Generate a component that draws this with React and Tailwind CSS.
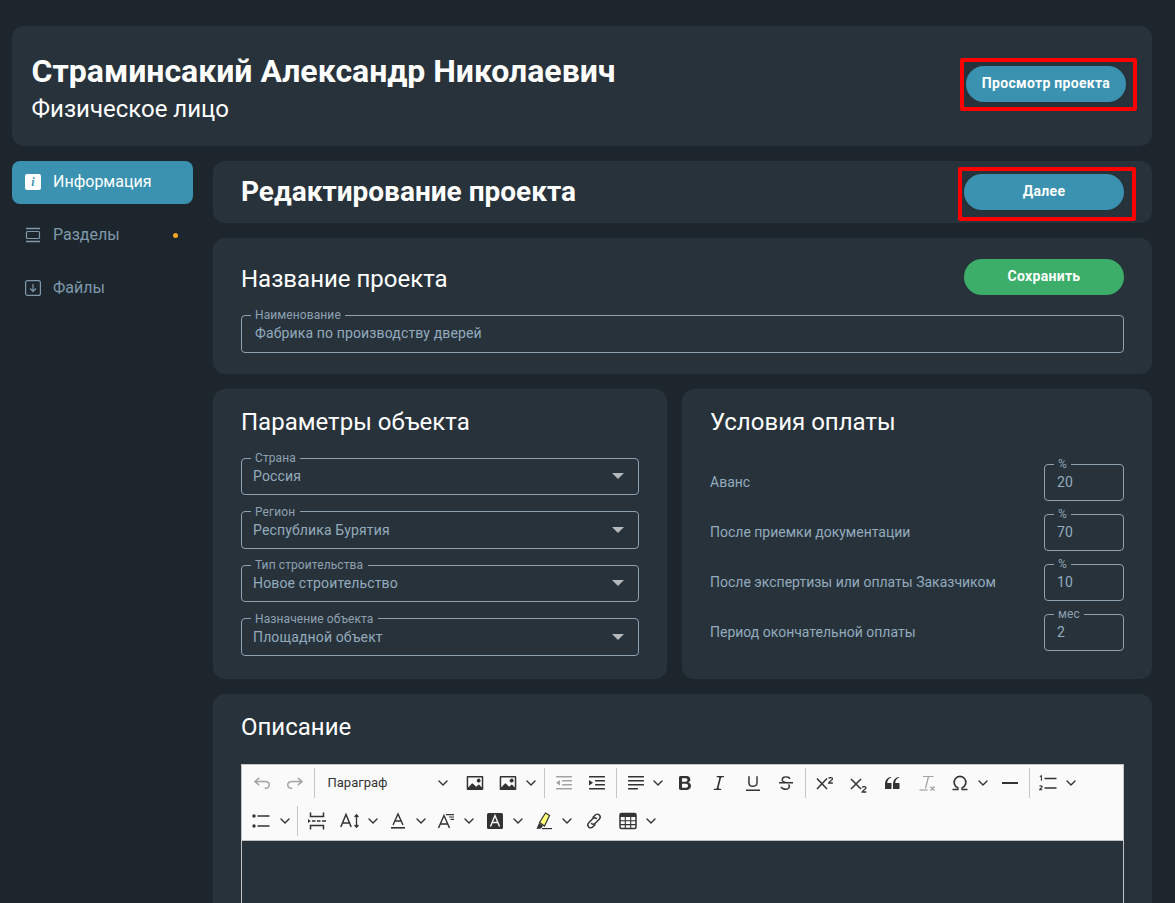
import React from 'react';

const Icon = ({ children, className = 'text-[#333333]' }) => (
  <svg viewBox="0 0 20 20" fill="none" className={`w-5 h-5 shrink-0 ${className}`}>{children}</svg>
);

const Chev = () => (
  <svg viewBox="0 0 10 10" fill="none" className="w-2.5 h-2.5 ml-[7.5px] shrink-0 text-[#333333]">
    <path d="M1 3l4 4 4-4" stroke="currentColor" strokeWidth="1.4" strokeLinecap="round" strokeLinejoin="round" />
  </svg>
);

const Sep = () => (
  <div className="w-1.5 h-[30px] flex justify-center shrink-0">
    <div className="w-px h-full bg-[#c6c6c6]" />
  </div>
);

const Btn = ({ children, w = 'w-[33px]' }) => (
  <div className={`${w} h-[34px] flex items-center justify-center shrink-0`}>{children}</div>
);

const Split = ({ children, w = 'w-[49.5px]' }) => (
  <div className={`${w} h-[34px] flex items-center pl-[6.5px] shrink-0`}>
    {children}
    <Chev />
  </div>
);

const imagePath = 'M6.91 10.54c.26-.23.64-.21.88.03l3.36 3.14 2.23-2.06a.64.64 0 0 1 .87 0l2.52 2.97V4.5H3.2v10.12l3.71-4.08zm10.27-7.51c.6 0 1.09.47 1.09 1.05v11.84c0 .59-.49 1.06-1.09 1.06H2.79c-.6 0-1.09-.47-1.09-1.06V4.08c0-.58.49-1.05 1.1-1.05h14.38zm-5.22 5.56a1.96 1.96 0 1 1 3.4-1.96 1.96 1.96 0 0 1-3.4 1.96z';

const Undo = () => (
  <Icon className="text-[#a3a3a3]">
    <path fill="currentColor" d="m5.042 9.367 2.189 1.837a.75.75 0 0 1-.965 1.149l-3.788-3.18a.747.747 0 0 1-.21-.284.75.75 0 0 1 .17-.945L6.23 4.762a.75.75 0 1 1 .964 1.15L4.863 7.866h8.917A.75.75 0 0 1 14 7.9a4 4 0 1 1-1.477 7.718l.344-1.489a2.5 2.5 0 1 0 1.094-4.73l.008-.032H5.042z" />
  </Icon>
);

const Redo = () => (
  <Icon className="text-[#a3a3a3]">
    <path fill="currentColor" d="m14.958 9.367-2.189 1.837a.75.75 0 0 0 .965 1.149l3.788-3.18a.747.747 0 0 0 .21-.284.75.75 0 0 0-.17-.945L13.77 4.762a.75.75 0 1 0-.964 1.15l2.331 1.955H6.22A.75.75 0 0 0 6 7.9a4 4 0 1 0 1.477 7.718l-.344-1.489A2.5 2.5 0 1 1 6.039 9.4l-.008-.032h8.927z" />
  </Icon>
);

const ImageIcon = () => (
  <Icon><path fill="currentColor" d={imagePath} /></Icon>
);

const IndentLines = ({ color }) => (
  <g fill={color}>
    <rect x="2" y="3" width="16" height="1.5" rx=".5" />
    <rect x="8" y="7" width="10" height="1.5" rx=".5" />
    <rect x="8" y="11" width="10" height="1.5" rx=".5" />
    <rect x="2" y="15" width="16" height="1.5" rx=".5" />
  </g>
);

const Toolbar = () => (
  <div className="bg-[#fafafa] border border-[#c4c4c4] h-[77px] pl-[3.5px]">
    <div className="flex items-center h-9">
      <Btn><Undo /></Btn>
      <Btn><Redo /></Btn>
      <Sep />
      <div className="w-[141px] h-[34px] pl-[10px] pr-[11px] flex items-center justify-between shrink-0 text-[13px] text-[#333333]">
        <span>Параграф</span>
        <Chev />
      </div>
      <Btn><ImageIcon /></Btn>
      <Split><ImageIcon /></Split>
      <Sep />
      <Btn>
        <Icon>
          <IndentLines color="#a3a3a3" />
          <path fill="#a3a3a3" d="M2 9.75 6 7v5.5z" />
        </Icon>
      </Btn>
      <Btn>
        <Icon>
          <IndentLines color="#333333" />
          <path fill="#333333" d="M6 9.75 2 7v5.5z" />
        </Icon>
      </Btn>
      <Sep />
      <Split>
        <Icon>
          <g fill="currentColor">
            <rect x="2" y="3" width="16" height="1.4" rx=".5" />
            <rect x="2" y="7" width="16" height="1.4" rx=".5" />
            <rect x="2" y="11" width="16" height="1.4" rx=".5" />
            <rect x="2" y="15" width="10" height="1.4" rx=".5" />
          </g>
        </Icon>
      </Split>
      <Btn>
        <Icon>
          <path fill="currentColor" d="M10.187 17H5.773c-.637 0-1.092-.138-1.364-.415-.273-.277-.409-.718-.409-1.323V4.738c0-.617.14-1.062.419-1.332.279-.27.73-.406 1.354-.406h4.68c.69 0 1.288.041 1.793.124.506.083.96.242 1.36.478.341.197.644.447.906.75a3.262 3.262 0 0 1 .808 2.162c0 1.401-.722 2.426-2.167 3.075C15.05 10.175 16 11.315 16 13.01a3.756 3.756 0 0 1-2.296 3.504 6.1 6.1 0 0 1-1.517.377c-.571.073-1.238.11-2 .11zm-.217-6.217H7v4.087h3.069c1.977 0 2.965-.69 2.965-2.072 0-.707-.256-1.22-.768-1.537-.512-.319-1.277-.478-2.296-.478zM7 5.13v3.619h2.606c.729 0 1.292-.067 1.69-.2a1.6 1.6 0 0 0 .91-.765c.165-.267.247-.566.247-.897 0-.707-.26-1.176-.778-1.409-.519-.232-1.31-.348-2.375-.348H7z" />
        </Icon>
      </Btn>
      <Btn w="w-[34px]">
        <Icon>
          <path fill="currentColor" d="m9.586 14.633.021.004c-.036.335.095.655.393.962.082.083.173.15.274.201h1.474a.6.6 0 1 1 0 1.2H5.304a.6.6 0 0 1 0-1.2h1.15c.474-.07.809-.182 1.005-.334.157-.122.291-.32.404-.597l2.416-9.55a1.053 1.053 0 0 0-.281-.823 1.12 1.12 0 0 0-.442-.296H8.15a.6.6 0 0 1 0-1.2h6.443a.6.6 0 1 1 0 1.2h-1.195c-.376.056-.65.155-.823.296-.215.175-.423.439-.623.79l-2.366 9.347z" />
        </Icon>
      </Btn>
      <Btn w="w-[34px]">
        <Icon>
          <path fill="currentColor" d="M3 18v-1.5h14V18zm2.2-8V3.6c0-.4.4-.6.8-.6.3 0 .7.2.7.6v6.2c0 2 1.3 2.8 3.2 2.8 1.9 0 3.4-.9 3.4-2.9V3.6c0-.3.4-.5.8-.5.3 0 .6.2.6.5V10c0 2.7-2.2 4-4.9 4-2.6 0-4.6-1.3-4.6-4z" />
        </Icon>
      </Btn>
      <Btn>
        <Icon>
          <path fill="currentColor" d="M7 16.4c-.8-.4-1.5-.9-2.2-1.5a.6.6 0 0 1-.2-.5l.3-.6h1c1 1.2 2.1 1.7 3.7 1.7 1 0 1.8-.3 2.3-.6.6-.4.6-1.2.6-1.3.2-1.2-.9-2.1-.9-2.1h2.1c.3.7.4 1.2.4 1.7v.8l-.6 1.2c-.6.8-1.1 1-1.6 1.2a6 6 0 0 1-2.4.6c-1 0-1.9-.3-2.5-.6zM6.8 9L6 8.3c-.4-.5-.5-.8-.5-1.6 0-.7.1-1.3.5-1.8.4-.6 1-1 1.6-1.3a6.3 6.3 0 0 1 4.7 0 4 4 0 0 1 1.7 1l.3.7c0 .1.2.4-.2.7-.4.2-.9.1-1 0a3 3 0 0 0-1.2-1c-.4-.2-1-.3-2-.4-.7 0-1.4.2-2 .6-.8.6-1 .8-1 1.5 0 .8.5 1 1.2 1.5.6.3 1.1.4 1.9.7H6.8z M3 10.5V9h14v1.5z" />
        </Icon>
      </Btn>
      <Sep />
      <Btn>
        <Icon>
          <path d="M2 5.5l10 10.5M12 5.5 2 16" stroke="currentColor" strokeWidth="1.5" />
          <path d="M13.7 5.5c.3-1.3 3.8-1.3 3.8.4 0 1.4-3.4 2.3-3.8 4.1h4.1" stroke="currentColor" strokeWidth="1.3" />
        </Icon>
      </Btn>
      <Btn>
        <Icon>
          <path d="M3 6l10 10M13 6 3 16" stroke="currentColor" strokeWidth="1.5" />
          <path d="M14.2 14.5c.3-1.3 3.8-1.3 3.8.4 0 1.4-3.4 2.3-3.8 4.1h4.1" stroke="currentColor" strokeWidth="1.3" />
        </Icon>
      </Btn>
      <Btn w="w-[35px]">
        <Icon>
          <path fill="currentColor" d="M3 10.423a6.5 6.5 0 0 1 6.056-6.408l.038.67C6.448 5.423 5.354 7.663 5.22 10H9c.552 0 .5.432.5.986v4.511c0 .554-.448.503-1 .503h-5c-.552 0-.5-.449-.5-1.003v-4.574zm8 0a6.5 6.5 0 0 1 6.056-6.408l.038.67c-2.646.739-3.74 2.979-3.873 5.315H17c.552 0 .5.432.5.986v4.511c0 .554-.448.503-1 .503h-5c-.552 0-.5-.449-.5-1.003v-4.574z" />
        </Icon>
      </Btn>
      <Btn w="w-[34px]">
        <Icon className="text-[#a3a3a3]">
          <path d="M6 3.5h10.5M11.5 3.5 8.5 15.5" stroke="currentColor" strokeWidth="1.2" />
          <path d="M2.5 17h8" stroke="currentColor" strokeWidth="1.2" />
          <path d="M13.5 13.5l4 4M17.5 13.5l-4 4" stroke="currentColor" strokeWidth="1.4" />
        </Icon>
      </Btn>
      <Split>
        <Icon>
          <path d="M2.5 16.5h5.3v-1.8a5.9 5.9 0 1 1 4.4 0v1.8h5.3" stroke="currentColor" strokeWidth="1.6" />
        </Icon>
      </Split>
      <Btn>
        <Icon><rect x="2" y="9" width="16" height="2" fill="currentColor" /></Icon>
      </Btn>
      <Sep />
      <Split>
        <Icon>
          <path d="M5.5 5.5h12M5.5 15h12" stroke="currentColor" strokeWidth="1.4" />
          <path d="M.8 3.6l1.6-.8v5M.6 13.4c.3-.8 2.6-.8 2.6.4 0 1-2.3 1.8-2.6 3h2.8" stroke="currentColor" strokeWidth="1.1" />
        </Icon>
      </Split>
    </div>
    <div className="flex items-center h-[38px] pt-0.5">
      <Split w="w-[49px]">
        <Icon>
          <circle cx="2" cy="5" r="1.7" fill="currentColor" />
          <circle cx="2" cy="15" r="1.7" fill="currentColor" />
          <path d="M5.5 5h12M5.5 15h12" stroke="currentColor" strokeWidth="1.5" />
        </Icon>
      </Split>
      <Sep />
      <Btn>
        <Icon>
          <path d="M3.5 1.5v4h13v-4M3.5 18.5v-4h13v4" stroke="currentColor" strokeWidth="1.5" />
          <path d="M5 10h3.5M10 10h3.5M15 10h4" stroke="currentColor" strokeWidth="1.5" />
          <path d="M3.8 10 1 8v4z" fill="currentColor" />
        </Icon>
      </Btn>
      <Split w="w-[48px]">
        <Icon>
          <path d="M.8 16 6 3.5 11.2 16M2.6 12h6.8" stroke="currentColor" strokeWidth="1.5" />
          <path d="M16.5 4v12M14.6 6l1.9-2.2L18.4 6M14.6 14l1.9 2.2 1.9-2.2" stroke="currentColor" strokeWidth="1.3" />
        </Icon>
      </Split>
      <Split w="w-[48px]">
        <Icon>
          <path d="M5 14 10 3l5 11M6.8 10h6.4" stroke="currentColor" strokeWidth="1.4" />
          <rect x="3" y="16" width="14" height="1.6" fill="currentColor" />
        </Icon>
      </Split>
      <Split w="w-[49px]">
        <Icon>
          <path d="M2.5 17 8 4.5 13.5 17M4.4 13h7.2" stroke="currentColor" strokeWidth="1.4" />
          <path d="M10 3.6h8M13 6h5M14.5 8.4h3.5" stroke="currentColor" strokeWidth="1.1" />
        </Icon>
      </Split>
      <Split w="w-[49px]">
        <Icon>
          <rect x="2" y="2" width="16" height="16" rx="1.5" fill="currentColor" />
          <path d="M5.5 15.5 10 4.5l4.5 11M7.1 11.5h5.8" stroke="#fafafa" strokeWidth="1.4" />
        </Icon>
      </Split>
      <Split w="w-[49px]">
        <Icon>
          <path d="M5.5 11.5 11.5 2l4 2.5-5 10.5z" fill="#fdfd77" stroke="#333333" strokeWidth="1.2" />
          <path d="M5 12 2.5 18l4.5-.4 2-2.6z" fill="#333333" />
          <rect x="8" y="17" width="10" height="1.2" fill="#333333" />
        </Icon>
      </Split>
      <Btn w="w-[35px]">
        <Icon>
          <path d="M7.5 12.5c1.3 1.3 2.9.7 3.8-.2l3.7-3.7c1.5-1.5 1.5-3.3.3-4.5s-3-1.2-4.5.3L9 6.2" stroke="currentColor" strokeWidth="1.4" strokeLinecap="round" />
          <path d="M12.5 7.5c-1.3-1.3-2.9-.7-3.8.2L5 11.4c-1.5 1.5-1.5 3.3-.3 4.5s3 1.2 4.5-.3l1.8-1.8" stroke="currentColor" strokeWidth="1.4" strokeLinecap="round" />
        </Icon>
      </Btn>
      <Split>
        <Icon>
          <rect x="2" y="2.5" width="16" height="15" rx="1.5" stroke="currentColor" strokeWidth="1.5" />
          <rect x="2" y="2.5" width="16" height="3.5" fill="currentColor" />
          <path d="M7.3 6v11M12.7 6v11M2 9.8h16M2 13.6h16" stroke="currentColor" strokeWidth="1.1" />
        </Icon>
      </Split>
    </div>
  </div>
);

const Field = ({ label, className = 'h-[43px]', children }) => (
  <fieldset className={`min-w-0 border border-[#8ea1b1] rounded-[4px] ${className}`}>
    <legend className="ml-[8.5px] px-[4.5px] text-xs leading-3 tracking-[0.1px] text-[#8ea1b1]">{label}</legend>
    {children}
  </fieldset>
);

const SelectField = ({ label, value }) => (
  <Field label={label}>
    <div className="h-6 pl-[11px] pr-[14px] flex items-center justify-between text-sm tracking-[0.14px] text-[#93abbd]">
      <span>{value}</span>
      <svg viewBox="0 0 12 6" className="w-3 h-1.5 text-[#b5b9bc]">
        <path d="M0 0h12L6 6z" fill="currentColor" />
      </svg>
    </div>
  </Field>
);

const PayRow = ({ label, unit, value }) => (
  <div className="flex items-center justify-between">
    <span className="pt-[5px] text-sm text-[#93abbd]">{label}</span>
    <Field label={unit} className="h-[43px] w-20">
      <div className="h-6 pl-3 flex items-center text-sm tracking-[0.14px] text-[#93abbd]">{value}</div>
    </Field>
  </div>
);

const BlueButton = ({ children }) => (
  <button className="w-40 h-9 pb-0.5 rounded-full bg-[#3b92b0] text-white text-sm font-bold tracking-[0.3px]">{children}</button>
);

export default function App() {
  return (
    <div className="h-[903px] overflow-hidden bg-[#1c262c] pt-[26px] px-3 font-[Roboto,sans-serif] text-white">
      <div className="w-[1140px] h-[120px] rounded-xl bg-[#28323b] pl-[19.5px] pr-[26px] flex items-center justify-between">
        <div className="pt-1">
          <h1 className="text-[32px] leading-[38px] font-bold">Страминсакий Александр Николаевич</h1>
          <p className="mt-1 text-2xl leading-[30px]">Физическое лицо</p>
        </div>
        <div className="relative mb-1">
          <BlueButton>Просмотр проекта</BlueButton>
          <div className="absolute -left-[6px] -top-[8px] w-[177px] h-[53px] border-4 border-[#ff0000] rounded-[2px]" />
        </div>
      </div>

      <div className="flex w-[1140px] mt-[15px] gap-5">
        <nav className="w-[181px] shrink-0 flex flex-col gap-2.5">
          <div className="h-[43px] pb-0.5 rounded-lg bg-[#3b92b0] pl-[13px] flex items-center gap-3 text-base">
            <div className="w-4 h-4 rounded-[2px] bg-white flex items-center justify-center text-[#3b92b0] text-xs font-bold italic font-[Liberation_Serif,serif]">i</div>
            <span>Информация</span>
          </div>
          <div className="h-[43px] pb-0.5 pl-[13px] pr-[15px] flex items-center gap-3 text-base text-[#7f99ab]">
            <svg viewBox="0 0 16 16" fill="none" className="w-4 h-4 shrink-0">
              <path d="M1 1.5h14M1 14.5h14" stroke="currentColor" strokeWidth="1.3" />
              <rect x="1.5" y="4.5" width="13" height="7" rx="1" stroke="currentColor" strokeWidth="1.2" />
            </svg>
            <span className="flex-1">Разделы</span>
            <span className="w-[5px] h-[5px] mt-0.5 rounded-full bg-[#f5a623]" />
          </div>
          <div className="h-[43px] pb-0.5 pl-[13px] flex items-center gap-3 text-base text-[#7f99ab]">
            <svg viewBox="0 0 16 16" fill="none" className="w-4 h-4 shrink-0">
              <rect x=".6" y=".6" width="14.8" height="14.8" rx="2" stroke="currentColor" strokeWidth="1.2" />
              <path d="M8 4v7.5M5 8.5l3 3 3-3" stroke="currentColor" strokeWidth="1.2" />
            </svg>
            <span>Файлы</span>
          </div>
        </nav>

        <main className="flex-1 min-w-0 flex flex-col gap-[15px]">
          <section className="h-[62px] rounded-xl bg-[#28323b] px-7 flex items-center justify-between">
            <h2 className="text-[28px] font-bold">Редактирование проекта</h2>
            <div className="relative">
              <BlueButton>Далее</BlueButton>
              <div className="absolute -left-[6px] -top-[7px] w-[178px] h-[54px] border-4 border-[#ff0000] rounded-[2px]" />
            </div>
          </section>

          <section className="rounded-xl bg-[#28323b] px-7 py-[21px]">
            <div className="flex items-center justify-between">
              <h3 className="mt-1 text-2xl leading-7">Название проекта</h3>
              <button className="w-40 h-9 pb-0.5 rounded-full bg-[#3cae6a] text-white text-sm font-bold tracking-[0.3px]">Сохранить</button>
            </div>
            <Field label="Наименование" className="mt-3.5 h-11">
              <div className="h-6 pl-[13px] flex items-center text-sm tracking-[0.14px] text-[#93abbd]">Фабрика по производству дверей</div>
            </Field>
          </section>

          <div className="grid grid-cols-[454px_470px] gap-[15px]">
            <section className="rounded-xl bg-[#28323b] px-7 pt-[19px] pb-[23px]">
              <h3 className="text-2xl leading-7">Параметры объекта</h3>
              <div className="mt-4 flex flex-col gap-[10.67px]">
                <SelectField label="Страна" value="Россия" />
                <SelectField label="Регион" value="Республика Бурятия" />
                <SelectField label="Тип строительства" value="Новое строительство" />
                <SelectField label="Назначение объекта" value="Площадной объект" />
              </div>
            </section>
            <section className="rounded-xl bg-[#28323b] px-7 pt-[19px] pb-[23px]">
              <h3 className="text-2xl leading-7">Условия оплаты</h3>
              <div className="mt-[22px] flex flex-col gap-[7px]">
                <PayRow label="Аванс" unit="%" value="20" />
                <PayRow label="После приемки документации" unit="%" value="70" />
                <PayRow label="После экспертизы или оплаты Заказчиком" unit="%" value="10" />
                <PayRow label="Период окончательной оплаты" unit="мес" value="2" />
              </div>
            </section>
          </div>

          <section className="rounded-xl bg-[#28323b] px-7 pt-[19px] pb-6">
            <h3 className="text-2xl leading-7">Описание</h3>
            <div className="mt-[23px]">
              <Toolbar />
              <div className="h-[240px] border border-t-0 border-[#c4c4c4]" />
            </div>
          </section>
        </main>
      </div>
    </div>
  );
}
